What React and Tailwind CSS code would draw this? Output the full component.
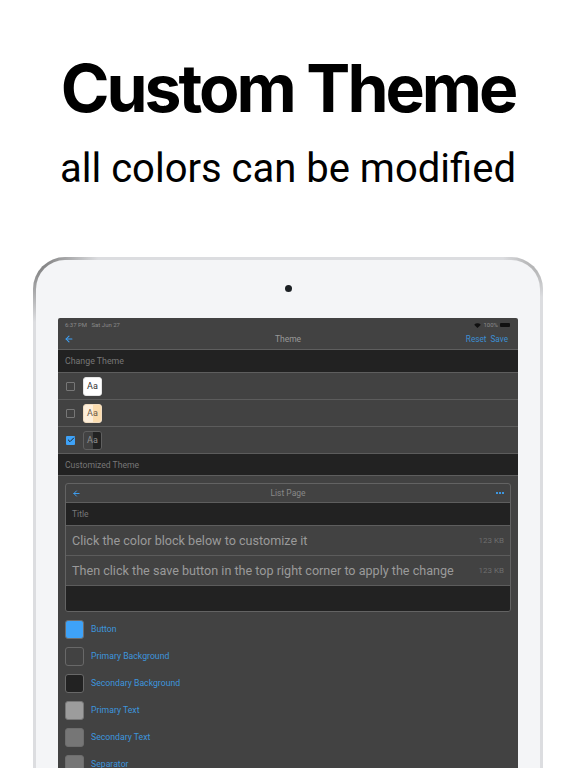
import { ArrowLeft, Check } from 'lucide-react';

const THEMES = [
  { id: 'light', box: 'border-[#e5e5e5] bg-white', text: 'text-[#333]', half: 'bg-white' },
  { id: 'sepia', box: 'border-[#f0dcc0] bg-[#fdeeda]', text: 'text-[#6b5a48]', half: 'bg-[#fbdcae]' },
  { id: 'dark', box: 'border-[#5f5f5f] bg-[#424242]', text: 'text-[#8f8f8f]', half: 'bg-[#222]', checked: true },
];

const COLORS = [
  { label: 'Button', swatch: 'bg-[#3ea2f8] border-[#6d6d6d]' },
  { label: 'Primary Background', swatch: 'bg-[#424242] border-[#686868]' },
  { label: 'Secondary Background', swatch: 'bg-[#222222] border-[#686868]' },
  { label: 'Primary Text', swatch: 'bg-[#9c9c9c] border-[#777]' },
  { label: 'Secondary Text', swatch: 'bg-[#767676] border-[#6d6d6d]' },
  { label: 'Separator', swatch: 'bg-[#767676] border-[#6d6d6d]' },
];

function SectionHeader({ children, className }) {
  return (
    <div className={`flex items-center bg-[#222] pt-[1px] text-[#777] border-b border-[#5e5e5e] ${className}`}>
      {children}
    </div>
  );
}

function ThemeRow({ theme }) {
  return (
    <div className="flex h-[27px] items-center border-b border-[#5c5c5c] pl-[8px]">
      {theme.checked ? (
        <span className="flex h-[9px] w-[9px] items-center justify-center rounded-[1px] bg-[#3ea2f8]">
          <Check className="h-[8px] w-[8px] text-[#222]" strokeWidth={3} />
        </span>
      ) : (
        <span className="h-[9px] w-[9px] rounded-[1px] border border-[#777]" />
      )}
      <span className={`relative ml-[8px] flex h-[19px] w-[19px] items-center justify-center overflow-hidden rounded-[3px] border ${theme.box}`}>
        <span className={`absolute inset-y-0 right-0 w-1/2 ${theme.half}`} />
        <span className={`relative text-[9px] leading-none ${theme.text}`}>Aa</span>
      </span>
    </div>
  );
}

function PreviewRow({ title }) {
  return (
    <div className="flex h-[30px] items-center justify-between border-b border-[#5c5c5c] px-[6px] pt-[1px]">
      <span className="whitespace-nowrap text-[12.6px] leading-none text-[#9a9a9a]">{title}</span>
      <span className="shrink-0 whitespace-nowrap text-[8px] leading-none text-[#6e6e6e]">123 KB</span>
    </div>
  );
}

export default function App() {
  return (
    <div className="h-[768px] w-[576px] overflow-hidden bg-white font-['Roboto',sans-serif]">
      <div className="flex flex-col items-center pt-[52px]">
        <h1 className="font-['Inter',sans-serif] text-[66px] font-bold leading-[72px] tracking-[-3px] text-black">Custom Theme</h1>
        <p className="mt-[20px] text-[40px] leading-[50px] text-black">all colors can be modified</p>
      </div>

      <div className="mx-[33px] mt-[63px] rounded-t-[32px] bg-[#dcdde0] bg-[radial-gradient(circle_at_0_0,#6f6f6f,transparent_65px),radial-gradient(circle_at_100%_0,#a0a0a0,transparent_40px)] px-[3px] pt-[3px]">
        <div className="h-[600px] rounded-t-[29px] bg-[#f4f5f7] px-[22px] pt-[25px]">
          <div className="mx-auto h-[7px] w-[7px] rounded-full bg-[#1c2024]" />

          <div className="mt-[26px] overflow-hidden rounded-t-[2px] bg-[#424242]">
            <div className="flex h-[14px] items-center justify-between pl-[7px] pr-[8px] text-[6px] leading-none text-[#8a8a8a]">
              <span>6:37 PM &nbsp; Sat Jun 27</span>
              <span className="flex items-center gap-[2px]">
                <svg viewBox="0 0 12 9" className="h-[5px] w-[7px] fill-[#111]">
                  <path d="M0 3 A8.5 8.5 0 0 1 12 3 L6 9 Z" />
                </svg>
                100%
                <span className="h-[4px] w-[10px] rounded-[1px] bg-[#111]" />
              </span>
            </div>

            <div className="grid h-[18px] grid-cols-3 items-center border-b border-[#5e5e5e] px-[10px] pb-[3px]">
              <ArrowLeft className="-ml-[4px] h-[10px] w-[10px] text-[#3ea2f8]" strokeWidth={2.5} />
              <span className="text-center text-[8.5px] leading-none text-[#999]">Theme</span>
              <span className="flex justify-end gap-[4px] text-[8.2px] leading-none text-[#3d8fd2]">
                <span>Reset</span>
                <span>Save</span>
              </span>
            </div>

            <SectionHeader className="h-[23px] px-[7px] text-[8.8px]">Change Theme</SectionHeader>
            {THEMES.map(theme => <ThemeRow key={theme.id} theme={theme} />)}
            <SectionHeader className="h-[22px] px-[7px] text-[8.6px]">Customized Theme</SectionHeader>

            <div className="mx-[7px] mt-[7px] overflow-hidden rounded-[3px] border border-[#636363]">
              <div className="grid h-[19px] grid-cols-3 items-center border-b border-[#5e5e5e] px-[6px]">
                <ArrowLeft className="h-[9px] w-[9px] text-[#3ea2f8]" strokeWidth={2.5} />
                <span className="text-center text-[8.5px] leading-none text-[#888]">List Page</span>
                <span className="flex justify-end gap-[1px]">
                  <span className="h-[2px] w-[2px] bg-[#3d95dd]" />
                  <span className="h-[2px] w-[2px] bg-[#3d95dd]" />
                  <span className="h-[2px] w-[2px] bg-[#3d95dd]" />
                </span>
              </div>
              <SectionHeader className="h-[23px] px-[6px] text-[8.5px]">Title</SectionHeader>
              <PreviewRow title="Click the color block below to customize it" />
              <PreviewRow title="Then click the save button in the top right corner to apply the change" />
              <div className="h-[25px] bg-[#222]" />
            </div>

            <div className="mt-[4px] px-[7px]">
              {COLORS.map(color => (
                <div key={color.label} className="flex h-[27px] items-center">
                  <span className={`h-[19px] w-[19px] rounded-[3px] border ${color.swatch}`} />
                  <span className="ml-[7px] text-[8.7px] leading-none text-[#3d95dd]">{color.label}</span>
                </div>
              ))}
            </div>
          </div>
        </div>
      </div>
    </div>
  );
}
